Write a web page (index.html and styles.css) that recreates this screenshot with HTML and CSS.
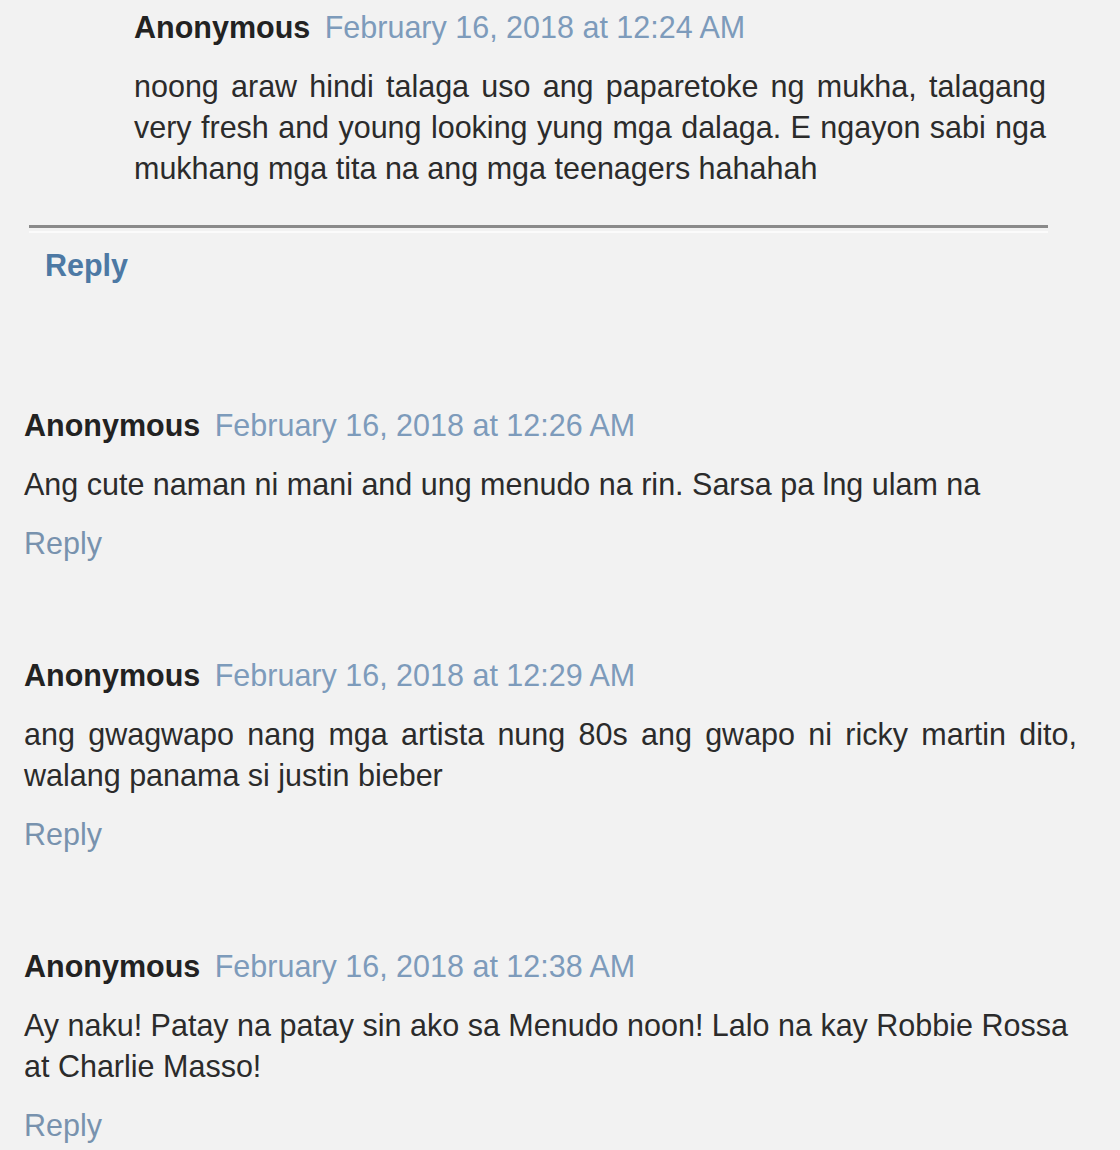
FILE: index.html
```html
<!DOCTYPE html>
<html>
<head>
  <meta charset="utf-8">
  <title>Comments</title>
  <link rel="stylesheet" href="styles.css">
</head>
<body>
  <div class="comments">
    <div class="thread">
      <div class="comment nested">
        <div class="comment-header">
          <span class="user">Anonymous</span>
          <span class="datetime">February 16, 2018 at 12:24 AM</span>
        </div>
        <p class="comment-content justify">noong araw hindi talaga uso ang paparetoke ng mukha, talagang very fresh and young looking yung mga dalaga. E ngayon sabi nga mukhang mga tita na ang mga teenagers hahahah</p>
      </div>
      <div class="thread-end"></div>
      <a class="thread-reply" href="#">Reply</a>
    </div>

    <div class="comment">
      <div class="comment-header">
        <span class="user">Anonymous</span>
        <span class="datetime">February 16, 2018 at 12:26 AM</span>
      </div>
      <p class="comment-content">Ang cute naman ni mani and ung menudo na rin. Sarsa pa lng ulam na</p>
      <a class="reply" href="#">Reply</a>
    </div>

    <div class="comment">
      <div class="comment-header">
        <span class="user">Anonymous</span>
        <span class="datetime">February 16, 2018 at 12:29 AM</span>
      </div>
      <p class="comment-content justify">ang gwagwapo nang mga artista nung 80s ang gwapo ni ricky martin dito, walang panama si justin bieber</p>
      <a class="reply" href="#">Reply</a>
    </div>

    <div class="comment">
      <div class="comment-header">
        <span class="user">Anonymous</span>
        <span class="datetime">February 16, 2018 at 12:38 AM</span>
      </div>
      <p class="comment-content">Ay naku! Patay na patay sin ako sa Menudo noon! Lalo na kay Robbie Rossa at Charlie Masso!</p>
      <a class="reply" href="#">Reply</a>
    </div>
  </div>
</body>
</html>
```

FILE: styles.css
```css
body {
  margin: 0;
  background-color: #f2f2f2;
  font-family: "Liberation Sans", Arial, sans-serif;
  font-size: 30.5px;
  line-height: 41px;
  color: #2b2b2b;
}

.comments {
  padding: 7px 43px 0 24px;
}

.thread {
  margin-bottom: 119px;
}

.comment {
  display: flex;
  flex-direction: column;
  align-items: flex-start;
  margin-bottom: 91px;
}

.comment:last-child {
  margin-bottom: 0;
}

.comment.nested {
  margin: 0 31px 0 110px;
  align-items: stretch;
}

.comment-header {
  white-space: nowrap;
}

.user {
  font-weight: bold;
  color: #222;
}

.datetime {
  margin-left: 6px;
  color: #7d9bbb;
}

.comment-content {
  margin: 18px 0;
}

.comment.nested .comment-content {
  margin-bottom: 0;
}

.justify {
  text-align: justify;
  align-self: stretch;
}

.thread-end {
  margin: 36px 29px 0 5px;
  border-top: 3px solid #8a8a8a;
  border-bottom: 2px solid #fbfbfb;
  height: 3px;
}

.thread-reply {
  display: inline-block;
  margin: 12px 0 0 21px;
  font-weight: bold;
  color: #4d79a4;
  text-decoration: none;
}

.reply {
  color: #7892ae;
  text-decoration: none;
}
```
